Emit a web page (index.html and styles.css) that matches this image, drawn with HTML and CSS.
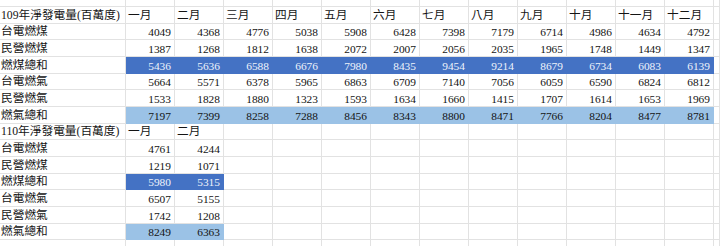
FILE: index.html
```html
<!DOCTYPE html>
<html lang="zh-Hant">
<head>
<meta charset="utf-8">
<title>淨發電量</title>
<link rel="stylesheet" href="styles.css">
</head>
<body>
<div class="sheet">
  <div class="row r7"><div class="c"></div><div class="c"></div><div class="c"></div><div class="c"></div><div class="c"></div><div class="c"></div><div class="c"></div><div class="c"></div><div class="c"></div><div class="c"></div><div class="c"></div><div class="c"></div><div class="c"></div><div class="c"></div></div>

  <div class="row r17"><div class="c lab">109年淨發電量(百萬度)</div><div class="c">一月</div><div class="c">二月</div><div class="c">三月</div><div class="c">四月</div><div class="c">五月</div><div class="c">六月</div><div class="c">七月</div><div class="c">八月</div><div class="c">九月</div><div class="c">十月</div><div class="c">十一月</div><div class="c">十二月</div><div class="c"></div></div>
  <div class="row r16"><div class="c lab">台電燃煤</div><div class="c n">4049</div><div class="c n">4368</div><div class="c n">4776</div><div class="c n">5038</div><div class="c n">5908</div><div class="c n">6428</div><div class="c n">7398</div><div class="c n">7179</div><div class="c n">6714</div><div class="c n">4986</div><div class="c n">4634</div><div class="c n">4792</div><div class="c"></div></div>
  <div class="row r17"><div class="c lab">民營燃煤</div><div class="c n">1387</div><div class="c n">1268</div><div class="c n">1812</div><div class="c n">1638</div><div class="c n">2072</div><div class="c n">2007</div><div class="c n">2056</div><div class="c n">2035</div><div class="c n">1965</div><div class="c n">1748</div><div class="c n">1449</div><div class="c n">1347</div><div class="c"></div></div>
  <div class="row r17"><div class="c lab">燃煤總和</div><div class="c n dk">5436</div><div class="c n dk">5636</div><div class="c n dk">6588</div><div class="c n dk">6676</div><div class="c n dk">7980</div><div class="c n dk">8435</div><div class="c n dk">9454</div><div class="c n dk">9214</div><div class="c n dk">8679</div><div class="c n dk">6734</div><div class="c n dk">6083</div><div class="c n dk">6139</div><div class="c"></div></div>
  <div class="row r16"><div class="c lab">台電燃氣</div><div class="c n">5664</div><div class="c n">5571</div><div class="c n">6378</div><div class="c n">5965</div><div class="c n">6863</div><div class="c n">6709</div><div class="c n">7140</div><div class="c n">7056</div><div class="c n">6059</div><div class="c n">6590</div><div class="c n">6824</div><div class="c n">6812</div><div class="c"></div></div>
  <div class="row r17"><div class="c lab">民營燃氣</div><div class="c n">1533</div><div class="c n">1828</div><div class="c n">1880</div><div class="c n">1323</div><div class="c n">1593</div><div class="c n">1634</div><div class="c n">1660</div><div class="c n">1415</div><div class="c n">1707</div><div class="c n">1614</div><div class="c n">1653</div><div class="c n">1969</div><div class="c"></div></div>
  <div class="row r17"><div class="c lab">燃氣總和</div><div class="c n lt">7197</div><div class="c n lt">7399</div><div class="c n lt">8258</div><div class="c n lt">7288</div><div class="c n lt">8456</div><div class="c n lt">8343</div><div class="c n lt">8800</div><div class="c n lt">8471</div><div class="c n lt">7766</div><div class="c n lt">8204</div><div class="c n lt">8477</div><div class="c n lt">8781</div><div class="c"></div></div>

  <div class="row r16"><div class="c lab">110年淨發電量(百萬度)</div><div class="c">一月</div><div class="c">二月</div><div class="c"></div><div class="c"></div><div class="c"></div><div class="c"></div><div class="c"></div><div class="c"></div><div class="c"></div><div class="c"></div><div class="c"></div><div class="c"></div><div class="c"></div></div>
  <div class="row r17"><div class="c lab">台電燃煤</div><div class="c n">4761</div><div class="c n">4244</div><div class="c"></div><div class="c"></div><div class="c"></div><div class="c"></div><div class="c"></div><div class="c"></div><div class="c"></div><div class="c"></div><div class="c"></div><div class="c"></div><div class="c"></div></div>
  <div class="row r17"><div class="c lab">民營燃煤</div><div class="c n">1219</div><div class="c n">1071</div><div class="c"></div><div class="c"></div><div class="c"></div><div class="c"></div><div class="c"></div><div class="c"></div><div class="c"></div><div class="c"></div><div class="c"></div><div class="c"></div><div class="c"></div></div>
  <div class="row r16"><div class="c lab">燃煤總和</div><div class="c n dk">5980</div><div class="c n dk">5315</div><div class="c"></div><div class="c"></div><div class="c"></div><div class="c"></div><div class="c"></div><div class="c"></div><div class="c"></div><div class="c"></div><div class="c"></div><div class="c"></div><div class="c"></div></div>
  <div class="row r17"><div class="c lab">台電燃氣</div><div class="c n">6507</div><div class="c n">5155</div><div class="c"></div><div class="c"></div><div class="c"></div><div class="c"></div><div class="c"></div><div class="c"></div><div class="c"></div><div class="c"></div><div class="c"></div><div class="c"></div><div class="c"></div></div>
  <div class="row r17"><div class="c lab">民營燃氣</div><div class="c n">1742</div><div class="c n">1208</div><div class="c"></div><div class="c"></div><div class="c"></div><div class="c"></div><div class="c"></div><div class="c"></div><div class="c"></div><div class="c"></div><div class="c"></div><div class="c"></div><div class="c"></div></div>
  <div class="row r16"><div class="c lab">燃氣總和</div><div class="c n lt">8249</div><div class="c n lt">6363</div><div class="c"></div><div class="c"></div><div class="c"></div><div class="c"></div><div class="c"></div><div class="c"></div><div class="c"></div><div class="c"></div><div class="c"></div><div class="c"></div><div class="c"></div></div>

  <div class="row r17"><div class="c"></div><div class="c"></div><div class="c"></div><div class="c"></div><div class="c"></div><div class="c"></div><div class="c"></div><div class="c"></div><div class="c"></div><div class="c"></div><div class="c"></div><div class="c"></div><div class="c"></div><div class="c"></div></div>
</div>
</body>
</html>
```

FILE: styles.css
```css
html, body {
  margin: 0;
  padding: 0;
  background: #ffffff;
  overflow: hidden;
}

.sheet {
  font-family: "Liberation Serif", "Noto Sans CJK TC", serif;
  font-size: 11.7px;
  color: #141414;
}

.row {
  display: grid;
  grid-template-columns: 126px repeat(12, 49px) 1fr;
}

.r7 { height: 7px; }
.r16 { height: 16px; }
.r17 { height: 17px; }

.c {
  box-sizing: border-box;
  border-right: 1px solid #e2e2e2;
  border-bottom: 1px solid #e2e2e2;
  padding: 0 3px 0 2px;
  display: flex;
  align-items: flex-end;
  line-height: 14px;
  white-space: nowrap;
  overflow: hidden;
}

.lab {
  padding-left: 1px;
}

.n {
  justify-content: flex-end;
  font-size: 11.4px;
}

.dk {
  background: #4472c4;
  color: #eef3fb;
  border-color: transparent;
}

.lt {
  background: #9bc2e6;
  border-color: transparent;
}
```
